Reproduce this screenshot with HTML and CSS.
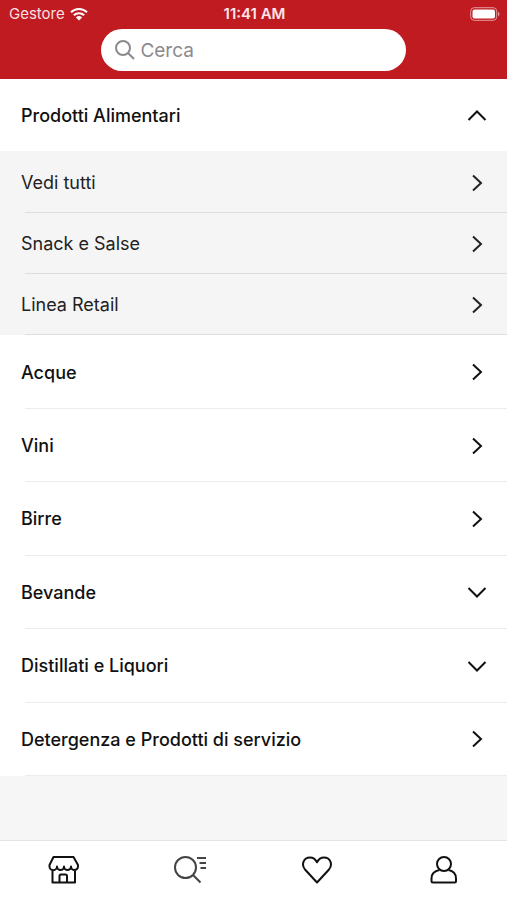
FILE: index.html
```html
<!DOCTYPE html>
<html lang="it">
<head>
<meta charset="utf-8">
<meta name="viewport" content="width=device-width, initial-scale=1">
<title>Categorie</title>
<link rel="stylesheet" href="styles.css">
</head>
<body>
<svg class="defs" aria-hidden="true">
  <symbol id="right" viewBox="0 0 20 20"><path d="M6 2.500 14 10l-8 7.500"/></symbol>
  <symbol id="down" viewBox="0 0 20 20"><path d="M1.500 6 10 14.500 18.500 6"/></symbol>
  <symbol id="up" viewBox="0 0 20 20"><path d="M1.500 14 10 5.500 18.500 14"/></symbol>
</svg>
<header class="header">
  <div class="status">
    <span class="carrier">Gestore
      <svg class="wifi" viewBox="0 0 18 14" aria-hidden="true"><path d="M1 5.200a11.500 11.500 0 0 1 16 0M3.800 8.300a7.500 7.500 0 0 1 10.400 0"/><path class="dot" d="M9 13.500 5.900 10.400a4.500 4.500 0 0 1 6.200 0z"/></svg>
    </span>
    <span class="time">11:41 AM</span>
    <svg class="battery" viewBox="0 0 30 14" aria-hidden="true"><rect class="shell" x=".7" y=".7" width="26" height="12.600" rx="3.500"/><rect class="charge" x="2.500" y="2.500" width="22.500" height="9" rx="2"/><path class="tip" d="M28 4.500q3 2.500 0 5z"/></svg>
  </div>
  <label class="search">
    <svg class="lens" viewBox="0 0 20 20" aria-hidden="true"><circle cx="8" cy="8" r="7"/><path d="m13 13 6 6"/></svg>
    <input type="search" placeholder="Cerca" aria-label="Cerca">
  </label>
</header>
<main class="categories">
  <div class="row open"><button type="button" aria-expanded="true">Prodotti Alimentari<svg class="chevron"><use href="#up"/></svg></button></div>
  <div class="sub">
    <div class="row"><a href="#">Vedi tutti<svg class="chevron"><use href="#right"/></svg></a></div>
    <div class="row"><a href="#">Snack e Salse<svg class="chevron"><use href="#right"/></svg></a></div>
    <div class="row"><a href="#">Linea Retail<svg class="chevron"><use href="#right"/></svg></a></div>
  </div>
  <div class="row"><a href="#">Acque<svg class="chevron"><use href="#right"/></svg></a></div>
  <div class="row"><a href="#">Vini<svg class="chevron"><use href="#right"/></svg></a></div>
  <div class="row"><a href="#">Birre<svg class="chevron"><use href="#right"/></svg></a></div>
  <div class="row"><button type="button" aria-expanded="false">Bevande<svg class="chevron"><use href="#down"/></svg></button></div>
  <div class="row"><button type="button" aria-expanded="false">Distillati e Liquori<svg class="chevron"><use href="#down"/></svg></button></div>
  <div class="row"><a href="#">Detergenza e Prodotti di servizio<svg class="chevron"><use href="#right"/></svg></a></div>
</main>
<nav class="tabs">
  <a href="#" aria-label="Negozio"><svg viewBox="0 0 32 28"><path d="M6.500 1h20L31 9v1.500a3.500 3.500 0 0 1-7 0 3.500 3.500 0 0 1-7 0 3.500 3.500 0 0 1-7 0 3.500 3.500 0 0 1-7.500 0V9zM5.500 14v12.500h22.500V14M12.500 26.500V20q0-1.500 1.500-1.500h4.500q1.500 0 1.500 1.500v6.500"/></svg></a>
  <a href="#" class="current" aria-label="Catalogo" aria-current="page"><svg viewBox="0 0 32 28"><circle cx="11.500" cy="11.500" r="10.500"/><path d="m19 19 7.500 7.500M23 2h9M25.500 7H32M26.500 12H32"/></svg></a>
  <a href="#" aria-label="Preferiti"><svg viewBox="0 0 32 28"><path d="M16 26.500 4 13.500C0 8.500 2.500 1.500 9 1.500c3.500 0 5.500 1.800 7 4.800 1.500-3 3.500-4.800 7-4.800 6.500 0 9 7 5 12z"/></svg></a>
  <a href="#" aria-label="Profilo"><svg viewBox="0 0 32 28"><circle cx="16" cy="8" r="7"/><path d="M11.500 14C6 15 3.500 18 3.500 22.500V25q0 1.500 1.500 1.500h21.500q1.500 0 1.500-1.500v-2.500c0-4.500-2.500-7.500-7.500-8.500"/></svg></a>
</nav>
</body>
</html>
```

FILE: styles.css
```css
* { box-sizing: border-box; }

body {
  margin: 0;
  min-height: 100vh;
  display: flex;
  flex-direction: column;
  background: #f6f6f6;
  color: #111;
  font-family: Inter, "Liberation Sans", sans-serif;
  font-size: 18px;
}

svg { fill: none; stroke: currentColor; stroke-width: 2; flex: none; }
.defs { display: none; }

.header {
  display: flex;
  flex-direction: column;
  align-items: center;
  height: 79px;
  background: #c11b22;
  color: #fff;
}

.status {
  width: 100%;
  height: 29px;
  padding: 0 7px 2px 9px;
  display: grid;
  grid-template-columns: 1fr auto 1fr;
  align-items: center;
  font-size: 15px;
}
.carrier { display: flex; align-items: center; gap: 5px; color: #fbdfe0; }
.wifi { width: 18px; height: 14px; color: #fff; }
.wifi .dot { fill: #fff; stroke: none; }
.time { font-weight: 600; color: #fbe6e7; }
.battery { width: 30px; height: 14px; justify-self: end; }
.shell { stroke: #e59a9d; stroke-width: 1; }
.charge { fill: #fff; stroke: none; }
.tip { fill: #e59a9d; stroke: none; }

.search {
  width: 60%;
  height: 42px;
  padding: 0 14px;
  display: flex;
  align-items: center;
  gap: 5px;
  border-radius: 21px;
  background: #fff;
  color: #8a8a8e;
}
.lens { width: 20px; height: 20px; }
.search input {
  min-width: 0;
  flex: 1;
  padding: 0;
  border: 0;
  outline: 0;
  background: none;
  font: inherit;
  font-size: 19px;
}
.search input::placeholder { color: #8a8a8e; opacity: 1; }

.categories {
  flex: 1;
  display: flex;
  flex-direction: column;
  margin-bottom: 64px;
  background: #fff;
}

.row {
  flex: 1 0 auto;
  min-height: 61px;
  display: flex;
  flex-direction: column;
  font-weight: 500;
}
.row::after {
  content: "";
  height: 1px;
  margin-left: 25px;
  background: #ececec;
}
.row.open::after { display: none; }
.row a,
.row button {
  flex: 1;
  display: flex;
  align-items: center;
  justify-content: space-between;
  padding: 1px 20px 0 21px;
  border: 0;
  background: none;
  color: inherit;
  font: inherit;
  text-align: left;
  text-decoration: none;
}
.sub { padding-top: 1px; background: #f5f5f5; }
.sub .row { font-weight: 400; color: #222; }
.sub .row::after { background: #dedede; }
.chevron { width: 20px; height: 20px; }

.tabs {
  height: 60px;
  padding-bottom: 2px;
  display: grid;
  grid-template-columns: repeat(4, 1fr);
  border-top: 1px solid #e4e4e4;
  background: #fff;
}
.tabs a { display: grid; place-items: center; color: #111; }
.tabs svg { width: 32px; height: 28px; stroke-linejoin: round; }
.tabs .current { color: #444; }
```
